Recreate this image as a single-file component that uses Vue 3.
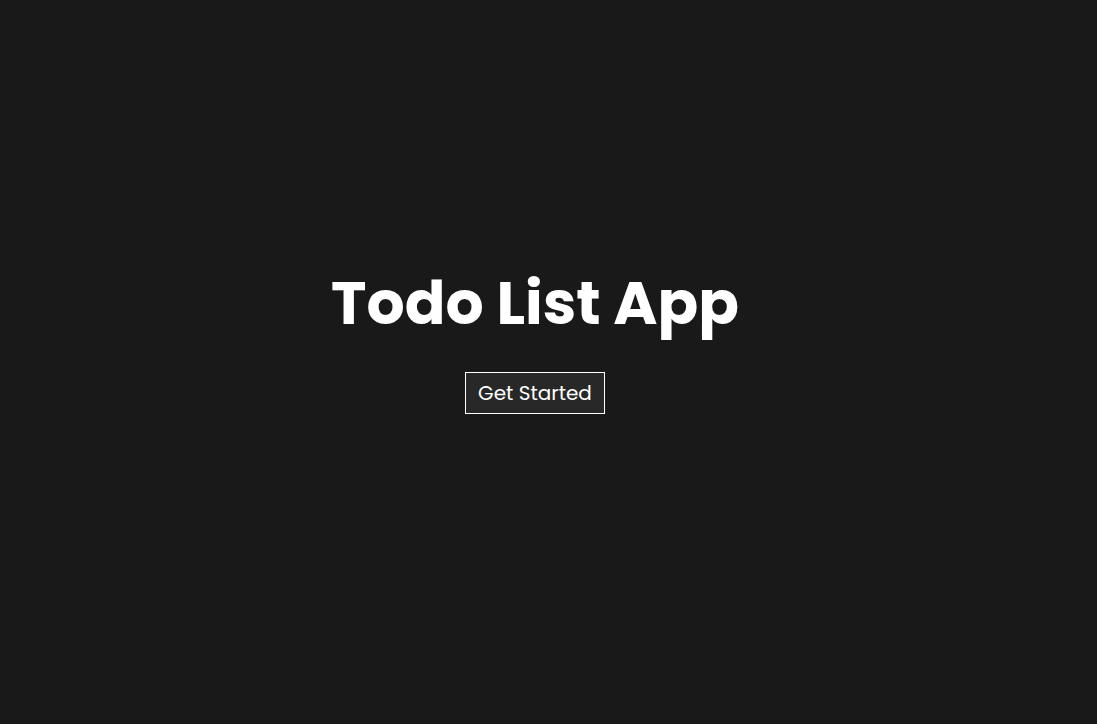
<script setup>
const title = 'Todo List App'
</script>

<template>
  <main class="landing">
    <h1 class="title">{{ title }}</h1>
    <button class="start" type="button">Get Started</button>
  </main>
</template>

<style>
body {
  margin: 0;
  background: #191919;
}
</style>

<style scoped>
.landing {
  box-sizing: border-box;
  min-height: 100vh;
  padding: 0 27px 52px 0;
  display: flex;
  flex-direction: column;
  align-items: center;
  justify-content: center;
  gap: 24px;
  background: #191919;
  color: #fff;
  font-family: Poppins, Inter, "Open Sans", sans-serif;
}

.title {
  margin: 0;
  font-size: 60px;
  font-weight: 700;
  line-height: 90px;
}

.start {
  padding: 5px 12px;
  border: 1px solid #fff;
  background: #282828;
  color: #fff;
  font-family: inherit;
  font-size: 20px;
  line-height: 30px;
}
</style>
